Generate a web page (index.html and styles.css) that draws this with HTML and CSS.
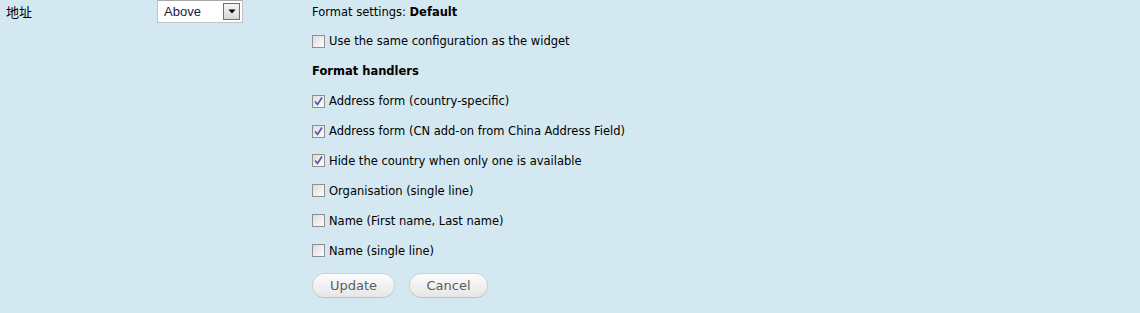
FILE: index.html
```html
<!DOCTYPE html>
<html>
<head>
<meta charset="utf-8">
<link rel="stylesheet" href="styles.css">
</head>
<body>
<div class="page">
  <div class="label-col">地址</div>
  <div class="select-col">
    <div class="select">
      <span class="select-value">Above</span>
      <span class="select-btn"><svg width="8" height="5" viewBox="0 0 8 5"><path d="M0.5 0.5 L7.5 0.5 L4 4.5 Z" fill="#000"/></svg></span>
    </div>
  </div>
  <div class="settings">
    <div class="row">Format settings: <b>Default</b></div>
    <label class="row"><span class="cb"></span>Use the same configuration as the widget</label>
    <div class="row heading">Format handlers</div>
    <label class="row"><span class="cb"><svg class="tick" width="11" height="11" viewBox="0 0 11 11"><path d="M2 5.5 L4.5 8.5 L9 1.5" fill="none" stroke="#4a57a6" stroke-width="1.6"/></svg></span>Address form (country-specific)</label>
    <label class="row"><span class="cb"><svg class="tick" width="11" height="11" viewBox="0 0 11 11"><path d="M2 5.5 L4.5 8.5 L9 1.5" fill="none" stroke="#4a57a6" stroke-width="1.6"/></svg></span>Address form (CN add-on from China Address Field)</label>
    <label class="row"><span class="cb"><svg class="tick" width="11" height="11" viewBox="0 0 11 11"><path d="M2 5.5 L4.5 8.5 L9 1.5" fill="none" stroke="#4a57a6" stroke-width="1.6"/></svg></span>Hide the country when only one is available</label>
    <label class="row"><span class="cb"></span>Organisation (single line)</label>
    <label class="row"><span class="cb"></span>Name (First name, Last name)</label>
    <label class="row"><span class="cb"></span>Name (single line)</label>
    <div class="buttons">
      <button class="btn btn-update">Update</button>
      <button class="btn btn-cancel">Cancel</button>
    </div>
  </div>
</div>
</body>
</html>
```
FILE: styles.css
```css
html, body {
  margin: 0;
  padding: 0;
  background: #d3e8f1;
  height: 100%;
}
.page {
  display: flex;
  align-items: flex-start;
  font-family: "DejaVu Sans", Verdana, sans-serif;
  color: #000;
}
.label-col {
  width: 151px;
  padding-left: 6px;
  padding-top: 3px;
  font-family: "Noto Sans CJK SC", sans-serif;
  font-size: 13px;
  line-height: 18px;
}
.select-col {
  width: 155px;
}
.select {
  box-sizing: border-box;
  width: 86px;
  height: 23px;
  background: #fff;
  border: 1px solid #bfc3c6;
  border-top-color: #a8a8a8;
  display: flex;
  align-items: center;
  justify-content: space-between;
  padding: 0 2px 0 6px;
}
.select-value {
  font-family: "Liberation Sans", Arial, sans-serif;
  font-size: 13px;
  color: #1a1a40;
}
.select-btn {
  box-sizing: border-box;
  width: 17px;
  height: 17px;
  border: 1px solid #707070;
  background: linear-gradient(#f4f4f4, #d8d8d8);
  display: flex;
  align-items: center;
  justify-content: center;
}
.settings {
  display: flex;
  flex-direction: column;
  gap: 11.875px;
  padding-top: 2.5px;
  font-size: 11.5px;
}
.row {
  display: flex;
  align-items: center;
  height: 18px;
  white-space: pre;
}
.row b {
  font-weight: bold;
}
.heading {
  font-weight: bold;
}
.cb {
  box-sizing: border-box;
  width: 13px;
  height: 13px;
  margin-right: 4px;
  border: 1px solid #8f8f8f;
  background: linear-gradient(135deg, #dcdcdc, #fdfdfd);
  display: flex;
  align-items: center;
  justify-content: center;
  flex-shrink: 0;
}
.buttons {
  display: flex;
  gap: 14px;
  margin-top: 2px;
}
.btn {
  box-sizing: border-box;
  height: 25px;
  border: 1px solid #cfcfcf;
  border-bottom-color: #bdbdbd;
  border-radius: 13px;
  background: linear-gradient(#fdfdfd, #e6e6e6);
  color: #5c5c5c;
  font-family: "DejaVu Sans", Verdana, sans-serif;
  font-size: 13px;
  padding: 0;
}
.btn-update { width: 83px; }
.btn-cancel { width: 79px; }
```
